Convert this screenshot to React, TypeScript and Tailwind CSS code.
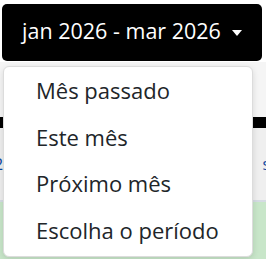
import { useState } from "react";

const PERIODS = ["Mês passado", "Este mês", "Próximo mês", "Escolha o período"];

export default function App() {
  const [selected, setSelected] = useState<string | null>(null);

  return (
    <div className="relative h-[259px] w-[266px] overflow-hidden bg-white font-['Open_Sans',sans-serif]">
      <div className="h-[62px] px-[2px] pt-[4px]">
        <button className="flex h-[57px] w-[260px] items-center justify-center gap-[11px] rounded-[5px] bg-black text-[21.5px] text-white">
          <span className="-mt-[2px]">jan 2026 - mar 2026</span>
          <span className="h-0 w-0 border-x-[5px] border-t-[6px] border-x-transparent border-t-white" />
        </button>
      </div>
      <div className="h-[55px] bg-[#f5f5f5]" />
      <div className="h-[11px] bg-black" />
      <div className="flex h-[72px] items-center justify-between bg-[#efefef] text-[16px] text-[#0d47a1]">
        <span className="-ml-[6px]">2</span>
        <span className="-mr-[4px]">s</span>
      </div>
      <div className="h-[2px] bg-[#d5dbe3]" />
      <div className="h-[57px] bg-[#c8e6c9]" />

      <ul className="absolute left-[3px] top-[66px] w-[250px] rounded-[6px] border border-[#dcdcdc] bg-white py-[1px] shadow-[0_2px_6px_rgba(0,0,0,0.12)]">
        {PERIODS.map((label) => (
          <li key={label}>
            <button
              onClick={() => setSelected(label)}
              className={`flex h-[46.7px] w-full items-center pb-[2px] pl-[32px] text-left text-[22px] text-[#212529] ${selected === label ? "bg-gray-100" : ""}`}
            >
              {label}
            </button>
          </li>
        ))}
      </ul>
    </div>
  );
}
